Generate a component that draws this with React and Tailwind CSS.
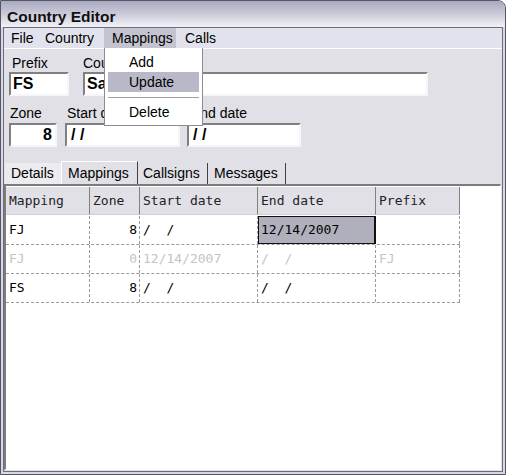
import React from "react";

const columns = [
  { key: "mapping", title: "Mapping", w: "w-[84px]" },
  { key: "zone", title: "Zone", w: "w-[50px]", right: true },
  { key: "start", title: "Start date", w: "w-[118px]" },
  { key: "end", title: "End date", w: "w-[118px]" },
  { key: "prefix", title: "Prefix", w: "w-[84px]" },
];

const rows = [
  { mapping: "FJ", zone: "8", start: "/  /", end: "12/14/2007", prefix: "", selected: "end" },
  { mapping: "FJ", zone: "0", start: "12/14/2007", end: "/  /", prefix: "FJ", dim: true },
  { mapping: "FS", zone: "8", start: "/  /", end: "/  /", prefix: "" },
];

function Field({ className, children, right }) {
  return (
    <div
      className={`h-[24px] bg-white border-2 border-t-[#808080] border-l-[#808080] border-b-[#f6f6f8] border-r-[#f6f6f8] flex items-center px-[2px] font-bold text-[16px] text-black whitespace-pre ${right ? "justify-end" : ""} ${className}`}
    >
      {children}
    </div>
  );
}

export default function App() {
  return (
    <div className="relative w-[506px] h-[475px] border border-[#55556a] rounded-tr-[8px] bg-[#d8d8e2] flex flex-col overflow-hidden font-['Liberation_Sans',Arial,sans-serif] text-[14px] text-black">
      {/* title bar */}
      <div className="h-[26px] shrink-0 bg-gradient-to-b from-[#a9a9bf] via-[#cbcbda] to-[#f2f2f6] pl-[6px] pt-[7px] leading-[18px] font-bold text-[15.5px] text-[#111]">
        Country Editor
      </div>

      <div className="flex-1 mx-[2px] mb-[2px] border border-[#6c6c80] flex flex-col bg-[#e0e0e6]">
        {/* menu bar */}
        <div className="h-[21px] shrink-0 bg-[#e2e2ec] border-b border-white flex items-stretch leading-[20px]">
          <div className="w-[34px] pl-[7px]">File</div>
          <div className="w-[66px] pl-[7px]">Country</div>
          <div className="w-[72px] pl-[8px] bg-[#c4c4d0]">Mappings</div>
          <div className="pl-[9px]">Calls</div>
        </div>

        {/* header fields */}
        <div className="flex pl-[5px] pt-[6px] gap-[14px] leading-[16px]">
          <div className="w-[60px] flex flex-col gap-[1px]">
            <span className="pl-[3px]">Prefix</span>
            <Field className="w-[60px]">FS</Field>
          </div>
          <div className="flex flex-col gap-[1px]">
            <span>Country</span>
            <Field className="w-[345px]">Saint Martin</Field>
          </div>
        </div>

        <div className="flex pl-[5px] pt-[9px] leading-[16px]">
          <div className="w-[48px] flex flex-col gap-[2px]">
            <span className="pl-[1px]">Zone</span>
            <Field right className="w-[48px] pr-[3px]">8</Field>
          </div>
          <div className="ml-[8px] flex flex-col gap-[2px]">
            <span className="pl-[2px]">Start date</span>
            <Field className="w-[115px] pl-[4px]">/ /</Field>
          </div>
          <div className="ml-[7px] flex flex-col gap-[2px]">
            <span className="pl-[4px]">End date</span>
            <Field className="w-[114px] pl-[4px]">/ /</Field>
          </div>
        </div>

        {/* tabs */}
        <div className="mt-[14px] h-[23px] shrink-0 flex items-end pl-[1px] leading-[20px]">
          <div className="h-[21px] w-[56px] pl-[6px] bg-[#ececf0]">Details</div>
          <div className="h-[23px] w-[77px] pl-[6px] pt-[1px] border-t border-l border-white border-r border-r-[#404040]">
            Mappings
          </div>
          <div className="h-[21px] w-[70px] pl-[5px] border-r border-[#404040]">Callsigns</div>
          <div className="h-[21px] w-[78px] pl-[6px] border-r border-[#404040]">Messages</div>
        </div>

        {/* mappings grid */}
        <div className="flex-1 mr-[1px] mb-[1px] bg-white border-t-2 border-l-2 border-t-[#7c7c7c] border-l-[#7c7c7c] border-r border-b border-r-white border-b-white font-['DejaVu_Sans_Mono',monospace] text-[13px]">
          <div className="flex h-[29px] mt-[1px]">
            {columns.map((c) => (
              <div
                key={c.key}
                className={`${c.w} h-[28px] bg-[#e0e0e6] border-r border-[#808080] border-b border-b-[#cfcfd6] pl-[3px] leading-[27px] text-[#222]`}
              >
                {c.title}
              </div>
            ))}
          </div>
          {rows.map((r, i) => (
            <div key={i} className="flex w-max h-[29px] border-b border-dashed border-[#9a9a9a]">
              {columns.map((c) => {
                const sel = r.selected === c.key;
                return (
                  <div
                    key={c.key}
                    className={`${c.w} h-[28px] leading-[28px] whitespace-pre border-r border-dashed border-[#9a9a9a] ${
                      c.right ? "text-right pr-[2px]" : "pl-[3px]"
                    } ${r.dim ? "text-[#c4c4c4]" : "text-black"} ${
                      sel ? "bg-[#b0b0bc] shadow-[inset_0_0_0_1px_#111] border-solid border-[#111]" : ""
                    }`}
                  >
                    {r[c.key]}
                  </div>
                );
              })}
            </div>
          ))}
        </div>
      </div>

      {/* open Mappings menu */}
      <div className="absolute left-[103px] top-[47px] w-[99px] h-[78px] bg-white border-x border-b border-[#8c8c96] pt-[4px] px-[3px] leading-[20px]">
        <div className="h-[20px] pl-[21px]">Add</div>
        <div className="h-[20px] pl-[21px] bg-[#b8b8c8]">Update</div>
        <div className="h-[10px] flex items-center">
          <div className="w-full h-px bg-[#a0a0a8]" />
        </div>
        <div className="h-[20px] pl-[21px]">Delete</div>
      </div>
    </div>
  );
}
